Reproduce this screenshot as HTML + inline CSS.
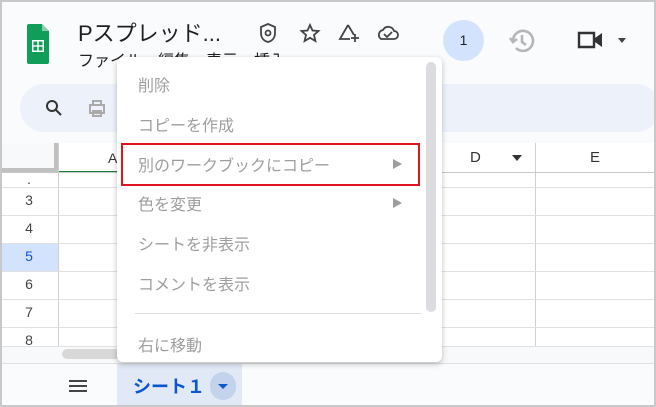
<!DOCTYPE html><html><head><meta charset="utf-8"><style>
*{margin:0;padding:0;box-sizing:border-box}
body{width:656px;height:407px;overflow:hidden;background:#f9fbfd;font-family:"Liberation Sans","Noto Sans CJK JP",sans-serif;position:relative}
.a{position:absolute}
.frame{position:absolute;inset:0;border:2px solid #c8c8c8;z-index:50;pointer-events:none}
.mi{position:absolute;left:138px;font-size:16px;color:#9e9e9e}
.ar{position:absolute;left:393px;width:0;height:0;border-top:5px solid transparent;border-bottom:5px solid transparent;border-left:9px solid #9e9e9e}
.hl{position:absolute;left:0;width:656px;height:1px;background:#e1e1e1}
.rn{position:absolute;left:0;width:58px;text-align:center;font-size:14px;color:#444}
</style></head><body>
<svg class="a" style="left:27px;top:24px" width="22" height="40" viewBox="0 0 22 40"><path d="M2 0h13l7 7v31a2 2 0 0 1-2 2H2a2 2 0 0 1-2-2V2a2 2 0 0 1 2-2z" fill="#0f9d58"/><path d="M15 0v7h7z" fill="#87ceac"/><rect x="5" y="16" width="12" height="12" fill="#fff"/><rect x="6.5" y="17.5" width="3.8" height="3.8" fill="#0f9d58"/><rect x="11.7" y="17.5" width="3.8" height="3.8" fill="#0f9d58"/><rect x="6.5" y="22.7" width="3.8" height="3.8" fill="#0f9d58"/><rect x="11.7" y="22.7" width="3.8" height="3.8" fill="#0f9d58"/></svg>
<div class="a" style="left:78px;top:16px;font-size:22px;color:#1f1f1f">Pスプレッド...</div>
<div class="a" style="left:78px;top:47px;font-size:16px;color:#1f1f1f">ファイル　編集　表示　挿入</div>
<svg class="a" style="left:258px;top:22px" width="150" height="22" viewBox="0 0 150 22" fill="none" stroke="#444" stroke-width="1.8"><path d="M10 2l7 3v6c0 5-3 8-7 9-4-1-7-4-7-9V5z"/><circle cx="10" cy="11" r="2.5"/><path d="M52 3l2.5 5.5 6 .5-4.5 4 1.4 6-5.4-3.2-5.4 3.2 1.4-6-4.5-4 6-.5z"/><path d="M90 3l-8 14h10M90 3l6 10M86 17h5M97 12v8M93 16h8"/><path d="M123 17h13a4 4 0 0 0 0-8 6 6 0 0 0-11-1 5 5 0 0 0-2 9z"/><path d="M126 12l3 3 5-5"/></svg>
<div class="a" style="left:443px;top:20px;width:41px;height:41px;border-radius:50%;background:#d3e3fd;text-align:center;line-height:41px;font-size:14px;color:#1f1f1f">1</div>
<svg class="a" style="left:508px;top:27px" width="28" height="28" viewBox="0 0 28 28" fill="none" stroke="#b5b5b5" stroke-width="2.6"><path d="M5 14a10 10 0 1 1 3 7"/><path d="M2 11l3 4 4-3"/><path d="M14 8v7l4 3"/></svg>
<svg class="a" style="left:576px;top:29px" width="56" height="22" viewBox="0 0 56 22"><path d="M3 4h15v14H3z" fill="none" stroke="#333" stroke-width="2.4"/><path d="M19 9l7-5v14l-7-5z" fill="#333"/><path d="M42 9h8l-4 5z" fill="#444"/></svg>
<div class="a" style="left:20px;top:84px;width:640px;height:48px;border-radius:24px;background:#edf2fa"></div>
<svg class="a" style="left:45px;top:99px" width="70" height="20" viewBox="0 0 70 20" fill="none" stroke="#333" stroke-width="2"><circle cx="7" cy="7" r="5"/><path d="M11 11l5 5"/><g stroke="#aaa"><rect x="45" y="6" width="14" height="8"/><rect x="48" y="2" width="8" height="4"/><rect x="48" y="12" width="8" height="5"/></g></svg>
<div class="a" style="left:0;top:143px;width:656px;height:220px;background:#fff"></div>
<div class="a" style="left:0;top:143px;width:58px;height:29px;background:#f8f9fa;border-right:4px solid #c0c0c0;border-bottom:4px solid #c0c0c0"></div>
<div class="a" style="left:58px;top:171px;width:60px;height:2px;background:#188038"></div>
<div class="a" style="left:58px;top:143px;width:1px;height:204px;background:#d0d0d0"></div>
<div class="a" style="left:535px;top:143px;width:1px;height:204px;background:#d0d0d0"></div>
<div class="a" style="left:108px;top:150px;font-size:14px;color:#333">A</div>
<div class="a" style="left:470px;top:149px;font-size:15px;color:#333">D</div>
<div class="a" style="left:512px;top:155px;border-left:5px solid transparent;border-right:5px solid transparent;border-top:6px solid #333"></div>
<div class="a" style="left:590px;top:149px;font-size:15px;color:#333">E</div>
<div class="hl" style="top:172px;background:#c8c8c8"></div>
<div class="hl" style="top:187px"></div><div class="hl" style="top:215px"></div><div class="hl" style="top:243px"></div><div class="hl" style="top:271px"></div><div class="hl" style="top:299px"></div><div class="hl" style="top:327px"></div><div class="hl" style="top:346px"></div>
<div class="a" style="left:0;top:244px;width:58px;height:27px;background:#d3e3fd"></div>
<div class="rn" style="top:174px">·</div>
<div class="rn" style="top:192px">3</div><div class="rn" style="top:220px">4</div><div class="rn" style="top:248px;color:#0b57d0">5</div><div class="rn" style="top:276px">6</div><div class="rn" style="top:304px">7</div><div class="rn" style="top:332px;height:14px;overflow:hidden">8</div>
<div class="a" style="left:0;top:347px;width:656px;height:16px;background:#f8f9fa"></div>
<div class="a" style="left:62px;top:349px;width:60px;height:10px;border-radius:5px;background:#d8d8d8"></div>
<div class="a" style="left:0;top:363px;width:656px;height:1px;background:#e0e0e0"></div>
<div class="a" style="left:69px;top:380px;width:18px;height:2px;background:#444;box-shadow:0 5px 0 #444,0 10px 0 #444"></div>
<div class="a" style="left:117px;top:364px;width:125px;height:43px;background:#e1e9f7"></div>
<div class="a" style="left:133px;top:373px;font-size:18px;color:#0b57d0;font-weight:bold">シート１</div>
<div class="a" style="left:210px;top:372px;width:26px;height:28px;border-radius:13px;background:#c4d3ec"></div>
<div class="a" style="left:218px;top:384px;border-left:5px solid transparent;border-right:5px solid transparent;border-top:5px solid #0b57d0"></div>
<div class="a" style="left:117px;top:57px;width:325px;height:305px;background:#fff;border-radius:6px;box-shadow:0 2px 6px rgba(0,0,0,.25)"></div>
<div class="a" style="left:426px;top:62px;width:10px;height:250px;border-radius:5px;background:#dadce0"></div>
<div class="mi" style="top:72px">削除</div>
<div class="mi" style="top:112px">コピーを作成</div>
<div class="mi" style="top:152px">別のワークブックにコピー</div><div class="ar" style="top:159px"></div>
<div class="mi" style="top:191px">色を変更</div><div class="ar" style="top:198px"></div>
<div class="mi" style="top:231px">シートを非表示</div>
<div class="mi" style="top:271px">コメントを表示</div>
<div class="a" style="left:135px;top:313px;width:286px;height:1px;background:#dadce0"></div>
<div class="mi" style="top:332px">右に移動</div>
<div class="a" style="left:121px;top:143px;width:299px;height:43px;border:2px solid #e0141e"></div>
<div class="frame"></div>
</body></html>
